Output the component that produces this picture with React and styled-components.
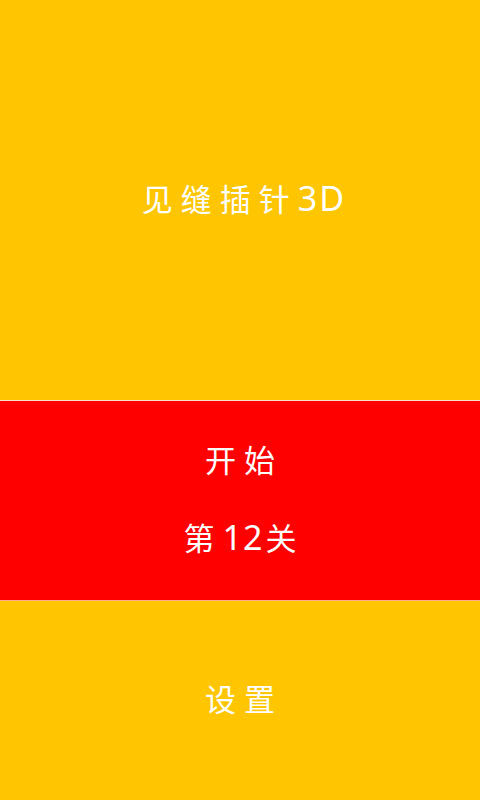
import React from "react";
import styled, { createGlobalStyle } from "styled-components";

const GlobalStyle = createGlobalStyle`
  html, body {
    margin: 0;
    padding: 0;
    background: #ffc600;
  }
  body {
    font-family: "Noto Sans CJK SC", "Noto Sans", sans-serif;
  }
`;

const Screen = styled.div`
  width: 480px;
  height: 800px;
  display: flex;
  flex-direction: column;
`;

const Panel = styled.section`
  display: flex;
  flex-direction: column;
  align-items: center;
  justify-content: center;
  gap: ${(p) => p.gap || 0}px;
  height: ${(p) => p.h}px;
  background: ${(p) => p.bg};
  border-top: ${(p) => (p.edge ? `1px solid ${p.edge}` : "none")};
  box-sizing: border-box;
`;

const Label = styled.div`
  color: #ffffff;
  font-size: 31px;
  font-weight: 400;
  line-height: 36px;
  letter-spacing: 8px;
  margin-right: -8px;
  padding-bottom: 5px;
  white-space: nowrap;
`;

// latin digits sit larger and tighter than the han characters
const Num = styled.span`
  font-family: "Noto Sans", sans-serif;
  font-size: 34px;
  letter-spacing: ${(p) => p.ls ?? 3}px;
`;

const App = () => {
  return (
    <>
      <GlobalStyle />
      <Screen>
        <Panel h={400} bg="#ffc600">
          <Label>
            见缝插针<Num ls={2}>3D</Num>
          </Label>
        </Panel>
        <Panel h={200} bg="#ff0000" edge="#fbe2c6" gap={37}>
          <Label>开始</Label>
          <Label>
            第<Num ls={1}>1</Num>
            <Num>2</Num>关
          </Label>
        </Panel>
        <Panel h={200} bg="#ffc600" edge="#ffa98a">
          <Label>设置</Label>
        </Panel>
      </Screen>
    </>
  );
};

export default App;
